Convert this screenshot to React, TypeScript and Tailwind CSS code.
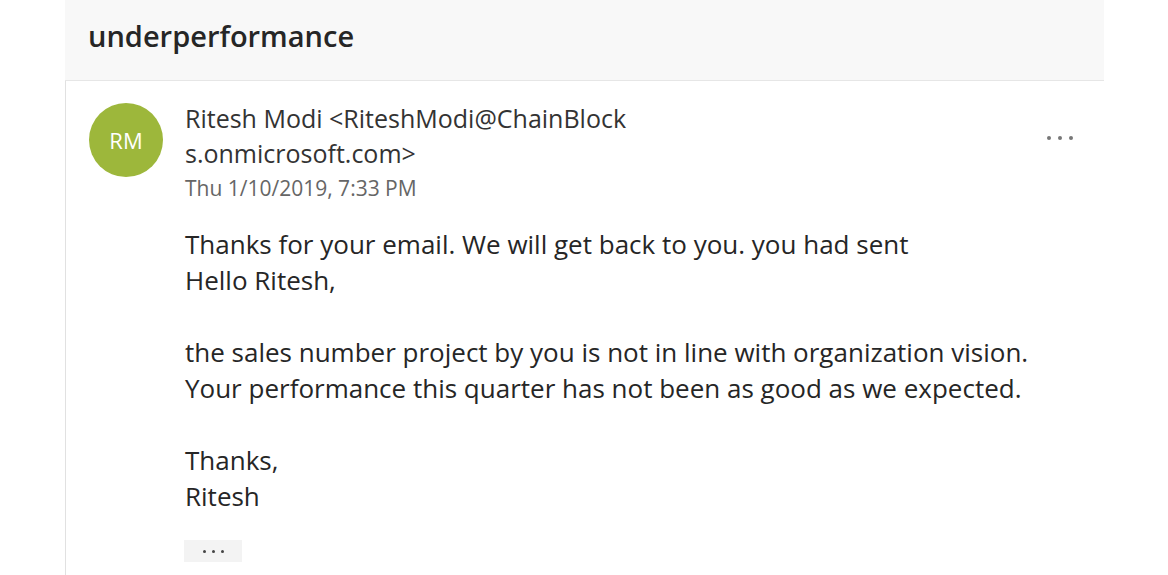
export default function App() {
  return (
    <div className="w-[1168px] h-[575px] overflow-hidden bg-white font-['Open_Sans',sans-serif] text-[#262626]">
      <div className="ml-[65px] w-[1039px]">
        <div className="h-[81px] bg-[#f8f8f8] pl-[23px] flex items-center border-b border-[#e6e6e6]">
          <h1 className="text-[29px] font-semibold text-[#262626] leading-none -mt-[10px]">underperformance</h1>
        </div>
        <div className="border-l border-[#e1e1e1] h-[494px] flex pl-[23px] pt-[22px]">
          <div className="w-[74px] h-[74px] rounded-full bg-[#9db73b] flex items-center justify-center text-white text-[22px] shrink-0">
            RM
          </div>
          <div className="ml-[22px] flex-1 flex flex-col">
            <div className="flex">
              <div className="flex-1 -mt-[2px]">
                <div className="text-[25px] leading-[35px] text-[#333]">
                  Ritesh Modi &lt;RiteshModi@ChainBlock
                  <br />
                  s.onmicrosoft.com&gt;
                </div>
                <div className="text-[21px] leading-[34px] text-[#666]">Thu 1/10/2019, 7:33 PM</div>
              </div>
              <div className="mr-[31px] mt-[30px] flex gap-[7px] items-center h-[10px]">
                <span className="w-[4px] h-[4px] rounded-full bg-[#777]" />
                <span className="w-[4px] h-[4px] rounded-full bg-[#777]" />
                <span className="w-[4px] h-[4px] rounded-full bg-[#777]" />
              </div>
            </div>
            <div className="mt-[21px] text-[26px] leading-[36px] text-[#262626]">
              <p>Thanks for your email. We will get back to you. you had sent</p>
              <p>Hello Ritesh,</p>
              <p>&nbsp;</p>
              <p>the sales number project by you is not in line with organization vision.</p>
              <p>Your performance this quarter has not been as good as we expected.</p>
              <p>&nbsp;</p>
              <p>Thanks,</p>
              <p>Ritesh</p>
            </div>
            <div className="mt-[26px] -ml-[1px] w-[58px] h-[22px] bg-[#f3f3f3] flex items-center justify-center gap-[6px]">
              <span className="w-[3px] h-[3px] rounded-full bg-[#444]" />
              <span className="w-[3px] h-[3px] rounded-full bg-[#444]" />
              <span className="w-[3px] h-[3px] rounded-full bg-[#444]" />
            </div>
          </div>
        </div>
      </div>
    </div>
  );
}
